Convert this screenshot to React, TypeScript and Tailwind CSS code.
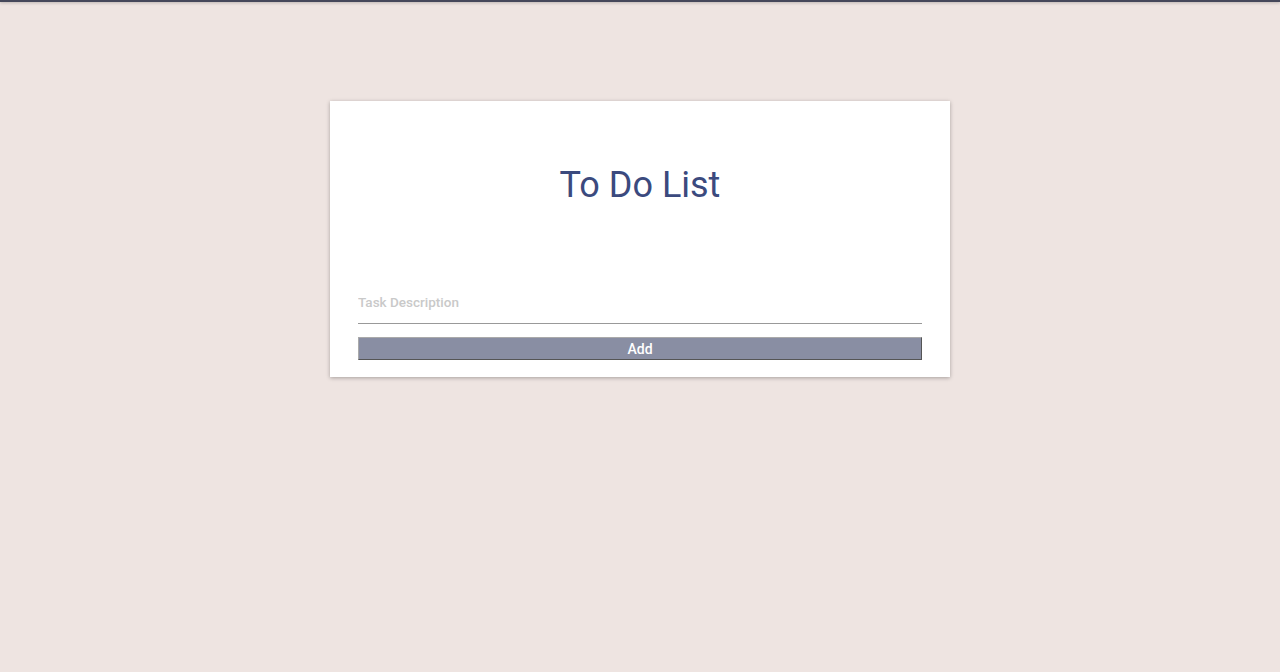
export default function App() {
  return (
    <div className="min-h-[672px] bg-[#eee4e1] font-['Roboto',sans-serif]">
      <div className="h-[2px] bg-[#45475a] shadow-[0_1px_3px_rgba(0,0,0,0.25)]" />
      <div className="flex justify-center pt-[99px]">
        <div className="w-[620px] bg-white px-[28px] pt-[63px] pb-[17px] shadow-[0_1px_4px_rgba(0,0,0,0.3)]">
          <h1 className="text-center text-[36px] leading-[43px] font-normal text-[#3b4a7e]">To Do List</h1>
          <input
            placeholder="Task Description"
            className="mt-[85px] block h-[32px] w-full border-b border-[#999999] pb-[11px] text-[13.5px] leading-[20px] font-medium text-[#555] outline-none placeholder:text-[#c9c9c9]"
          />
          <button className="mt-[13px] block h-[23px] w-full border border-t-[#aaa] border-l-[#aaa] border-r-[#555] border-b-[#555] bg-[#898ea3] text-[14px] leading-[20px] font-medium text-white">
            Add
          </button>
        </div>
      </div>
    </div>
  );
}
